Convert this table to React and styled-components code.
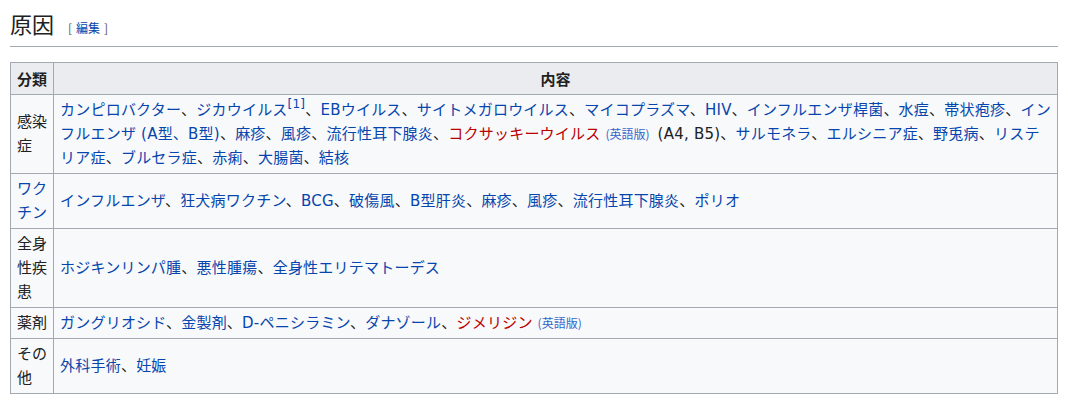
import React from "react"
import styled, { createGlobalStyle } from "styled-components"

const GlobalStyle = createGlobalStyle`
  body {
    margin: 0;
    background: #ffffff;
    color: #202122;
    font-family: "DejaVu Sans", "Noto Sans CJK JP", sans-serif;
  }
`

const Page = styled.div`
  padding: 8px 10px 10px 10px;
`

const Heading = styled.h2`
  display: flex;
  align-items: baseline;
  margin: 0;
  padding-bottom: 3px;
  font-family: "Noto Sans CJK JP", sans-serif;
  font-size: 22px;
  font-weight: normal;
  line-height: 30px;
  border-bottom: 1px solid #a2a9b1;
`

const EditSection = styled.span`
  margin-left: 14px;
  font-size: 12px;
  color: #54595d;

  & a {
    margin: 0 4px;
  }
`

const Link = styled.a`
  color: ${p => (p.$missing ? "#ba0000" : "#0645ad")};
  text-decoration: none;
`

const Interlang = styled.a`
  margin: 0 8px 0 5px;
  font-family: "Noto Sans CJK JP", sans-serif;
  font-size: 12px;
  line-height: 1;
  letter-spacing: 0;
  color: #3366cc;
  text-decoration: none;
`

const Ref = styled.sup`
  font-size: 12px;
  line-height: 1;
  vertical-align: top;
  color: #0645ad;
`

const Table = styled.table`
  width: 100%;
  margin-top: 15px;
  border-collapse: collapse;
  background: #f8f9fa;
  border: 1px solid #a2a9b1;
  font-size: 15px;
  line-height: 24px;
`

const HeadCell = styled.th`
  padding: 4px 6px 3px;
  background: #eaecf0;
  border: 1px solid #a2a9b1;
  font-family: "Noto Sans CJK JP", sans-serif;
  font-weight: bold;
  text-align: center;
  width: ${p => (p.$narrow ? "30px" : "auto")};
`

const KindCell = styled.td`
  width: 30px;
  padding: 3px 6px;
  border: 1px solid #a2a9b1;
  vertical-align: middle;
`

const BodyCell = styled.td`
  padding: 3px 6px;
  border: 1px solid #a2a9b1;
  vertical-align: middle;
  letter-spacing: 0.22px;
`

const Plain = styled.span`
  color: #202122;
`

const rows = [
  {
    kind: "感染症",
    items: [
      { t: "カンピロバクター" },
      { t: "ジカウイルス", ref: "[1]" },
      { t: "EBウイルス" },
      { t: "サイトメガロウイルス" },
      { t: "マイコプラズマ" },
      { t: "HIV" },
      { t: "インフルエンザ桿菌" },
      { t: "水痘" },
      { t: "帯状疱疹" },
      { t: "インフルエンザ (A型、B型)" },
      { t: "麻疹" },
      { t: "風疹" },
      { t: "流行性耳下腺炎" },
      { t: "コクサッキーウイルス", missing: true, en: true, note: "(A4, B5)" },
      { t: "サルモネラ" },
      { t: "エルシニア症" },
      { t: "野兎病" },
      { t: "リステリア症" },
      { t: "ブルセラ症" },
      { t: "赤痢" },
      { t: "大腸菌" },
      { t: "結核" },
    ],
  },
  {
    kind: "ワクチン",
    kindLink: true,
    items: [
      { t: "インフルエンザ" },
      { t: "狂犬病ワクチン" },
      { t: "BCG" },
      { t: "破傷風" },
      { t: "B型肝炎" },
      { t: "麻疹" },
      { t: "風疹" },
      { t: "流行性耳下腺炎" },
      { t: "ポリオ" },
    ],
  },
  {
    kind: "全身性疾患",
    items: [{ t: "ホジキンリンパ腫" }, { t: "悪性腫瘍" }, { t: "全身性エリテマトーデス" }],
  },
  {
    kind: "薬剤",
    items: [
      { t: "ガングリオシド" },
      { t: "金製剤" },
      { t: "D-ペニシラミン" },
      { t: "ダナゾール" },
      { t: "ジメリジン", missing: true, en: true },
    ],
  },
  {
    kind: "その他",
    items: [{ t: "外科手術" }, { t: "妊娠" }],
  },
]

const Item = ({ item }) => (
  <>
    <Link href="#" $missing={item.missing}>{item.t}</Link>
    {item.ref && <Ref>{item.ref}</Ref>}
    {item.en && <Interlang href="#">(英語版)</Interlang>}
    {item.note && <Plain>{item.note}</Plain>}
  </>
)

export default function App() {
  return (
    <Page>
      <GlobalStyle />
      <Heading>
        原因
        <EditSection>
          [<Link href="#">編集</Link>]
        </EditSection>
      </Heading>
      <Table>
        <thead>
          <tr>
            <HeadCell $narrow>分類</HeadCell>
            <HeadCell>内容</HeadCell>
          </tr>
        </thead>
        <tbody>
          {rows.map(row => (
            <tr key={row.kind}>
              <KindCell>
                {row.kindLink ? <Link href="#">{row.kind}</Link> : row.kind}
              </KindCell>
              <BodyCell>
                {row.items.map((item, i) => (
                  <React.Fragment key={item.t}>
                    {i > 0 && <Plain>、</Plain>}
                    <Item item={item} />
                  </React.Fragment>
                ))}
              </BodyCell>
            </tr>
          ))}
        </tbody>
      </Table>
    </Page>
  )
}
